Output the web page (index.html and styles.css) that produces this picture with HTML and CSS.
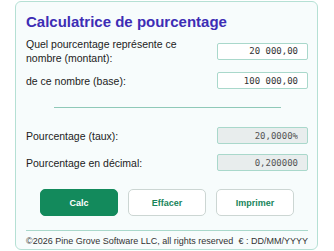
FILE: index.html
```html
<!DOCTYPE html>
<html lang="fr">
<head>
    <meta charset="UTF-8">
    <title>Calculatrice de pourcentage</title>
    <link rel="stylesheet" href="styles.css">
</head>
<body>
<div class="calc">
    <h1 class="title">Calculatrice de pourcentage</h1>
    <div class="row row-first">
        <label class="label" for="amount">Quel pourcentage représente ce nombre (montant):</label>
        <input class="field" id="amount" type="text" value="20 000,00">
    </div>
    <div class="row">
        <label class="label" for="base">de ce nombre (base):</label>
        <input class="field" id="base" type="text" value="100 000,00">
    </div>
    <hr class="divider">
    <div class="row row-res">
        <label class="label" for="rate">Pourcentage (taux):</label>
        <input class="field field-out" id="rate" type="text" value="20,0000%" readonly>
    </div>
    <div class="row">
        <label class="label" for="dec">Pourcentage en décimal:</label>
        <input class="field field-out" id="dec" type="text" value="0,200000" readonly>
    </div>
    <div class="buttons">
        <button class="btn btn-main">Calc</button>
        <button class="btn">Effacer</button>
        <button class="btn">Imprimer</button>
    </div>
    <div class="footer">
        <span>©2026 Pine Grove Software LLC, all rights reserved</span>
        <span>€ : DD/MM/YYYY</span>
    </div>
</div>
</body>
</html>
```

FILE: styles.css
```css
* {
    box-sizing: border-box;
}
body {
    margin: 0;
    background: #fff;
    font-family: "Liberation Sans", Arial, sans-serif;
    color: #222;
}
.calc {
    width: 303px;
    height: 249px;
    margin: 1px 0 0 15px;
    padding: 9px 9px 0 10px;
    background: #f7fcfc;
    border: 1px solid #b5e0d4;
    border-radius: 6px;
}
.title {
    margin: 0 0 4px;
    font-size: 15px;
    line-height: 22px;
    font-weight: 700;
    color: #3d2db5;
}
.row {
    display: flex;
    align-items: center;
    justify-content: space-between;
    margin-top: 10px;
}
.row-first {
    margin-top: 0;
    height: 28px;
}
.row-first + .row {
    margin-top: 7px;
}
.row-res {
    margin-top: 0;
}
.label {
    width: 175px;
    font-size: 10.5px;
    line-height: 14px;
}
.field {
    width: 91px;
    height: 17px;
    padding: 0 9px;
    border: 1px solid #a9d8cb;
    border-radius: 2px;
    background: #fff;
    font-family: "DejaVu Sans Mono", monospace;
    font-size: 9px;
    color: #333;
    text-align: right;
}
.field-out {
    background: #e8eded;
    color: #555;
}
.divider {
    width: 227px;
    margin: 18px auto 19px;
    border: 0;
    border-top: 1px solid #8fc9b8;
}
.buttons {
    display: flex;
    justify-content: center;
    gap: 10px;
    margin-top: 18px;
}
.btn {
    width: 78px;
    height: 27px;
    border: 1px solid #ccd6d3;
    border-radius: 5px;
    background: #fff;
    font-family: "Liberation Sans", Arial, sans-serif;
    font-size: 9px;
    font-weight: 700;
    color: #18855a;
}
.btn-main {
    background: #138a5c;
    border-color: #138a5c;
    color: #fff;
}
.footer {
    display: flex;
    justify-content: space-between;
    margin-top: 14px;
    padding-top: 4px;
    border-top: 1px solid #a9d8cb;
    font-size: 9px;
    line-height: 12px;
    color: #333;
}
```
